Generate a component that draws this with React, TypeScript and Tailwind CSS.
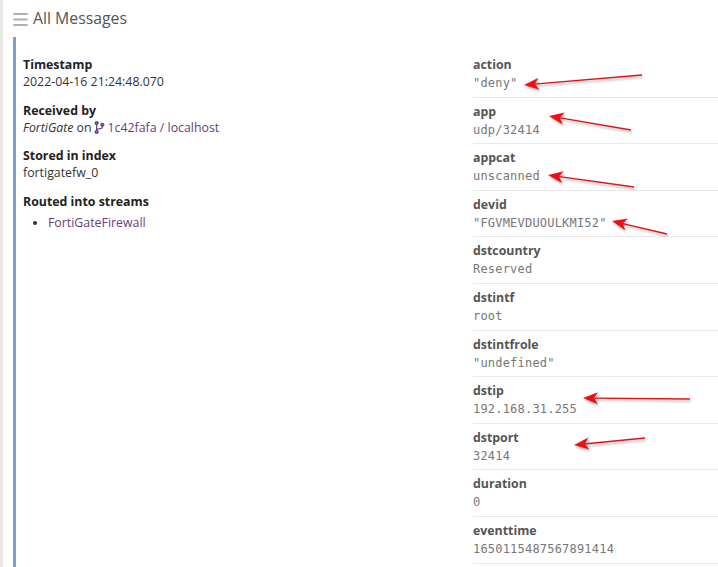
import { Menu } from "lucide-react";
import { FaCodeBranch } from "react-icons/fa";

const FIELDS = [
  { name: "action", value: '"deny"' },
  { name: "app", value: "udp/32414" },
  { name: "appcat", value: "unscanned" },
  { name: "devid", value: '"FGVMEVDUOULKMI52"' },
  { name: "dstcountry", value: "Reserved" },
  { name: "dstintf", value: "root" },
  { name: "dstintfrole", value: '"undefined"' },
  { name: "dstip", value: "192.168.31.255" },
  { name: "dstport", value: "32414" },
  { name: "duration", value: "0" },
  { name: "eventtime", value: "1650115487567891414" },
];

// tail x,y -> tip x,y of the hand drawn red arrows
const ARROWS = [
  [642, 75, 524, 85],
  [631, 130, 549, 116],
  [634, 187, 548, 175],
  [667, 234, 612, 221],
  [690, 399, 583, 398],
  [645, 438, 574, 445],
];

function Arrow({ from, to }: { from: [number, number]; to: [number, number] }) {
  const angle = Math.atan2(from[1] - to[1], from[0] - to[0]);
  const deg = (angle * 180) / Math.PI;
  return (
    <g transform={`translate(${to[0]} ${to[1]}) rotate(${deg})`}>
      <line
        x1="10"
        y1="0"
        x2={Math.hypot(from[0] - to[0], from[1] - to[1])}
        y2="0"
        stroke="#d8151b"
        strokeWidth="1.3"
      />
      <path d="M0 0 L15 -6 L11 0 L15 6 Z" fill="#ee0f16" />
    </g>
  );
}

export default function App() {
  return (
    <div className="relative flex h-[567px] w-[718px] overflow-hidden bg-white font-['Open_Sans',sans-serif] text-[#333]">
      <div className="w-[3px] shrink-0 bg-[#e8e8e8]" />
      <div className="flex-1">
        <div className="flex h-[37px] items-center gap-[3px] pl-[8px] pt-[1px]">
          <Menu size={19} strokeWidth={2.6} className="text-[#b0b0b0]" />
          <span className="text-[15.8px] text-[#555]">All Messages</span>
        </div>

        <div className="ml-[10px] flex h-[530px] gap-[10px] border-l-[3px] border-[#7f9cd3] pl-[7px]">
          <div className="w-[440px] pt-[19px] text-[12.35px] leading-[17px]">
            <div className="mb-[11.6px]">
              <div className="font-bold text-[#222]">Timestamp</div>
              <div>2022-04-16 21:24:48.070</div>
            </div>
            <div className="mb-[11.6px]">
              <div className="font-bold text-[#222]">Received by</div>
              <div className="flex items-center">
                <em>FortiGate</em>
                <span className="ml-[3px]">on</span>
                <FaCodeBranch size={13} className="mx-[1.5px] text-[#6a3d7d]" />
                <span className="text-[#6a3d7d]">1c42fafa / localhost</span>
              </div>
            </div>
            <div className="mb-[11.6px]">
              <div className="font-bold text-[#222]">Stored in index</div>
              <div>fortigatefw_0</div>
            </div>
            <div>
              <div className="font-bold text-[#222]">Routed into streams</div>
              <ul className="mt-[4px] list-disc pl-[25px]">
                <li className="text-[#6a3d7d] marker:text-[#333]">FortiGateFirewall</li>
              </ul>
            </div>
          </div>

          <div className="w-[245px] pt-[14px]">
            {FIELDS.map((f) => (
              <div key={f.name} className="h-[46.6px] border-b border-[#e9e9e9] pt-[4px]">
                <div className="text-[12.35px] leading-[19px] font-bold text-[#555]">
                  {f.name}
                </div>
                <div className="mt-[1px] font-['DejaVu_Sans_Mono',monospace] text-[12px] leading-[17px] tracking-[0.2px] text-[#777]">
                  {f.value}
                </div>
              </div>
            ))}
          </div>
        </div>
      </div>

      <svg
        className="pointer-events-none absolute left-0 top-0 drop-shadow-[1px_2px_1px_rgba(0,0,0,0.3)]"
        width="718"
        height="567"
      >
        {ARROWS.map((a, i) => (
          <Arrow key={i} from={[a[0], a[1]]} to={[a[2], a[3]]} />
        ))}
      </svg>
    </div>
  );
}
